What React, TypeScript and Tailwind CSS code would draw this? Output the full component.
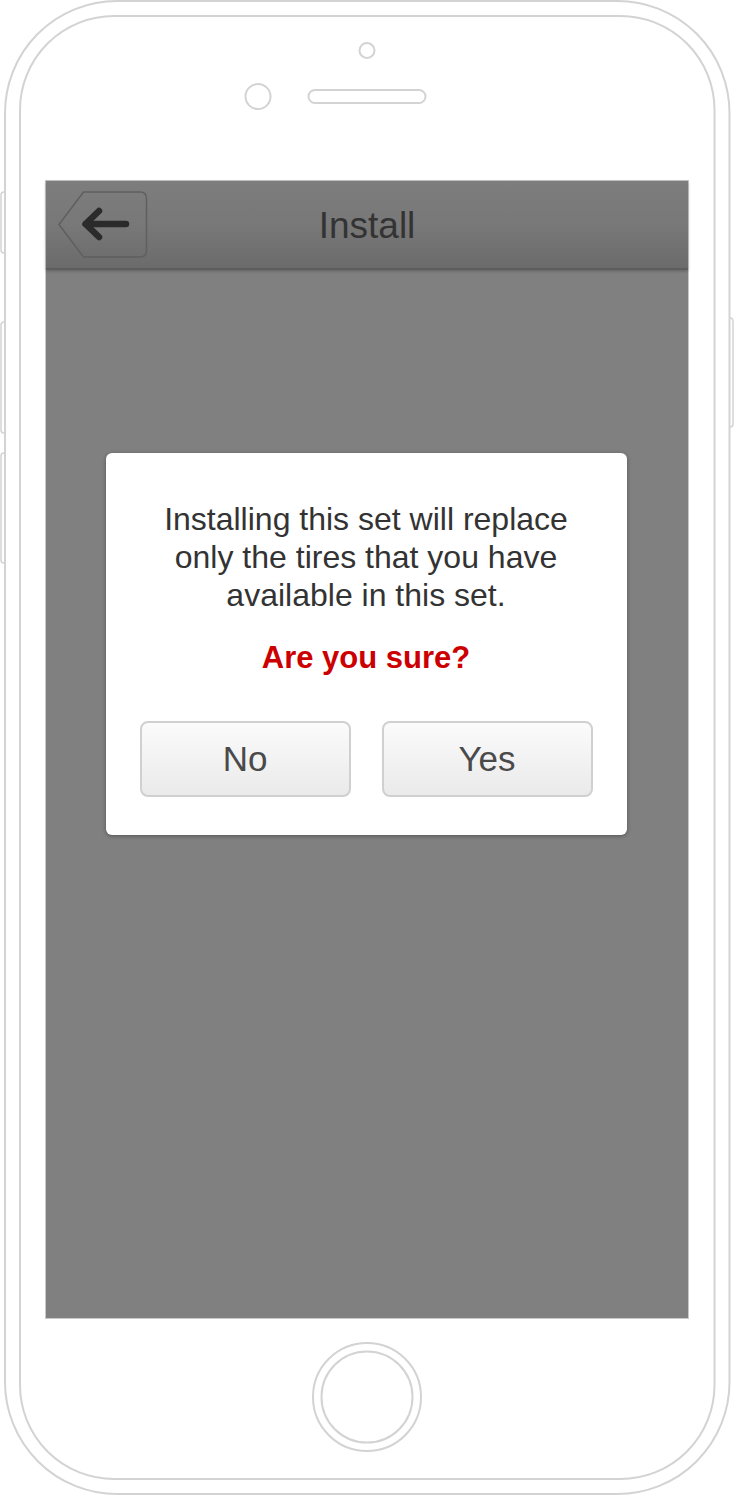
import React from 'react';

// Outline of the handset: body, side keys, earpiece, camera and home key
function PhoneFrame() {
  const stroke = '#d3d3d3';
  return (
    <svg className="absolute inset-0" width="734" height="1496" viewBox="0 0 734 1496" fill="none">
      {/* side keys */}
      <rect x="1" y="192" width="7" height="61" rx="3" stroke={stroke} strokeWidth="1.5" />
      <rect x="1" y="322" width="7" height="111" rx="3" stroke={stroke} strokeWidth="1.5" />
      <rect x="1" y="453" width="7" height="110" rx="3" stroke={stroke} strokeWidth="1.5" />
      <rect x="726" y="318" width="7" height="109" rx="3" stroke={stroke} strokeWidth="1.5" />
      <path d="M128 1494 Q 145 1486 162 1494" stroke={stroke} strokeWidth="1.5" />
      {/* body */}
      <rect x="5" y="1" width="724.5" height="1493" rx="112" fill="#fff" stroke={stroke} strokeWidth="2" />
      <rect x="20" y="16" width="694.5" height="1463" rx="94" stroke={stroke} strokeWidth="2" />
      {/* earpiece + cameras */}
      <circle cx="367" cy="50.5" r="7.5" stroke={stroke} strokeWidth="2" />
      <circle cx="258" cy="96.5" r="12.5" stroke={stroke} strokeWidth="2" />
      <rect x="308.5" y="90" width="117" height="13" rx="6.5" stroke={stroke} strokeWidth="2" />
      {/* home key */}
      <circle cx="367" cy="1397" r="54" stroke={stroke} strokeWidth="2" />
      <circle cx="367" cy="1397" r="45.5" stroke={stroke} strokeWidth="2" />
    </svg>
  );
}

function BackButton() {
  return (
    <svg width="90" height="67" viewBox="0 0 90 67" fill="none">
      <path
        d="M25.5 1 H82 Q88.5 1 88.5 7.5 V59.5 Q88.5 66 82 66 H25.5 L1 33.5 Z"
        stroke="#5f5f5f"
        strokeWidth="1.5"
        strokeLinejoin="round"
      />
      <path d="M28 33 H68" stroke="#2b2b2b" strokeWidth="6.5" strokeLinecap="round" />
      <path d="M41 20 L27.5 33 L41 46" stroke="#2b2b2b" strokeWidth="6.5" strokeLinecap="round" strokeLinejoin="round" />
    </svg>
  );
}

function DialogButton({ label }: { label: string }) {
  return (
    <button className="h-[76px] w-[211px] rounded-[8px] border-2 border-[#d0d0d0] bg-gradient-to-b from-[#fbfbfb] to-[#eaeaea] text-[35px] text-[#4a4a4a]">
      {label}
    </button>
  );
}

export default function App() {
  return (
    <div className="relative h-[1496px] w-[734px] overflow-hidden bg-white font-['Liberation_Sans',Arial,sans-serif]">
      <PhoneFrame />

      <div className="relative pl-[45px] pt-[180px]">
        <div className="flex h-[1139px] w-[644px] flex-col border border-[#c9c9c9] bg-[#808080]">
          {/* nav bar */}
          <div className="grid h-[89px] grid-cols-[1fr_auto_1fr] items-center border-b-2 border-[#5d5d5d] bg-gradient-to-b from-[#7d7d7d] via-[#787878] to-[#6b6b6b] shadow-[0_1px_3px_rgba(0,0,0,0.25)]">
            <div className="flex items-center pl-[12px]">
              <BackButton />
            </div>
            <h1 className="pt-[2px] text-[37px] text-[#333333]">Install</h1>
            <div />
          </div>

          {/* confirm dialog */}
          <div className="flex justify-center pr-[2px] pt-[183px]">
            <div className="flex w-[521px] flex-col items-center rounded-[6px] bg-white px-[34px] pb-[38px] pt-[47px] shadow-[0_1px_4px_rgba(0,0,0,0.35)]">
              <p className="text-center text-[32px] leading-[38px] text-[#333333]">
                Installing this set will replace
                <br />
                only the tires that you have
                <br />
                available in this set.
              </p>
              <p className="mt-[25px] text-center text-[31px] font-bold leading-[38px] text-[#cc0000]">Are you sure?</p>
              <div className="mt-[44px] flex w-full justify-between">
                <DialogButton label="No" />
                <DialogButton label="Yes" />
              </div>
            </div>
          </div>
        </div>
      </div>
    </div>
  );
}
